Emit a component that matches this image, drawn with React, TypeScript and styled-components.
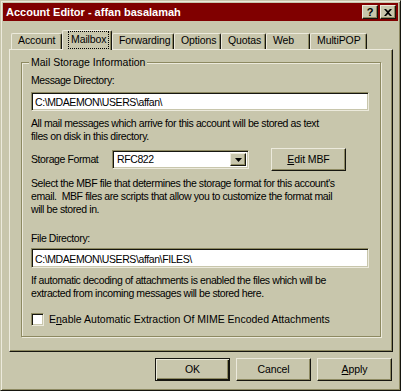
import React from 'react';
import styled, { createGlobalStyle, css } from 'styled-components';

// Brick-ish classic colour scheme
const FACE = '#c8c6ac';
const LIGHT = '#eceadc';
const SHADOW = '#8d8961';
const DARK = '#161610';
const CAPTION = '#800000';

const GlobalStyle = createGlobalStyle`
	html, body {
		margin: 0;
		padding: 0;
		background: ${FACE};
	}
	body {
		font-family: 'Liberation Sans', Arial, sans-serif;
		font-size: 10.5px;
		letter-spacing: -0.4px;
		line-height: 13px;
		color: #000;
	}
	* {
		box-sizing: border-box;
	}
`;

const raised = css`
	border: 1px solid;
	border-color: ${LIGHT} ${DARK} ${DARK} ${LIGHT};
	box-shadow: inset -1px -1px ${SHADOW};
`;

const sunken = css`
	border: 1px solid;
	border-color: ${SHADOW} ${LIGHT} ${LIGHT} ${SHADOW};
	box-shadow: inset 1px 1px ${DARK}, inset -1px -1px ${FACE};
`;

const Window = styled.div`
	width: 401px;
	height: 391px;
	display: flex;
	flex-direction: column;
	padding: 2px;
	border: 1px solid;
	border-color: ${FACE} ${DARK} ${DARK} ${FACE};
	box-shadow: inset 1px 1px ${LIGHT}, inset -1px -1px ${SHADOW};
	background: ${FACE};
`;

const TitleBar = styled.div`
	height: 18px;
	display: flex;
	align-items: center;
	padding: 0 2px 0 3px;
	background: ${CAPTION};
`;

const TitleText = styled.div`
	flex: 1;
	color: #fff;
	letter-spacing: 0;
	font-weight: bold;
	font-size: 11px;
`;

const CaptionButtons = styled.div`
	display: flex;
	gap: 2px;
`;

const CaptionButton = styled.div`
	${raised};
	width: 16px;
	height: 14px;
	display: flex;
	align-items: center;
	justify-content: center;
	background: ${FACE};
	letter-spacing: 0;
	font-weight: bold;
	font-size: 11px;
	line-height: 12px;
`;

const Body = styled.div`
	flex: 1;
	display: flex;
	flex-direction: column;
	padding: 9px 5px 0 6px;
`;

const TabStrip = styled.div`
	display: flex;
	align-items: flex-end;
	padding-left: 2px;
	position: relative;
	z-index: 1;
`;

const Tab = styled.div<{ $active?: boolean; $width: number }>`
	width: ${({ $width }) => $width}px;
	height: ${({ $active }) => ($active ? 20 : 16)}px;
	margin-bottom: ${({ $active }) => ($active ? -1 : 0)}px;
	padding-left: ${({ $active }) => ($active ? 5 : 6)}px;
	border-top: 1px solid ${LIGHT};
	border-left: 1px solid ${LIGHT};
	border-right: 1px solid ${DARK};
	border-radius: 2px 2px 0 0;
	box-shadow: inset -1px 0 ${SHADOW};
	background: ${FACE};
	letter-spacing: -0.1px;
	white-space: nowrap;
`;

const FocusRing = styled.span`
	display: inline-block;
	padding: 1px 2px 2px;
	border: 1px dotted #000;
	line-height: 13px;
`;

const TabPanel = styled.div`
	height: 303px;
	border: 1px solid;
	border-color: ${LIGHT} ${DARK} ${DARK} ${LIGHT};
	box-shadow: inset -1px -1px ${SHADOW};
	padding: 6px 11px 0 11px;
`;

const GroupBox = styled.fieldset`
	margin: 0;
	padding: 5px 11px 10px 9px;
	min-inline-size: 0;
	border: 1px solid ${SHADOW};
	box-shadow: inset 1px 1px ${LIGHT}, 1px 1px ${LIGHT};
	display: flex;
	flex-direction: column;
`;

const Legend = styled.legend`
	padding: 0 2px;
	margin-left: -2px;
	background: ${FACE};
	line-height: 13px;
	letter-spacing: 0;
`;

const FieldLabel = styled.div<{ $gap?: number }>`
	margin-top: ${({ $gap }) => $gap ?? 0}px;
`;

const TextBox = styled.div<{ $gap: number; $height: number }>`
	${sunken};
	margin-top: ${({ $gap }) => $gap}px;
	height: ${({ $height }) => $height}px;
	background: #fff;
	padding: 2px 3px 0;
	display: flex;
	align-items: center;
	white-space: nowrap;
`;

const HelpText = styled.p`
	margin: 6px 0 0;
	white-space: nowrap;
`;

const FormatRow = styled.div`
	margin-top: 5px;
	height: 23px;
	display: flex;
	align-items: center;
	white-space: nowrap;
`;

const RowLabel = styled.div`
	width: 81px;
`;

const Select = styled.div`
	${sunken};
	width: 137px;
	height: 19px;
	background: #fff;
	display: flex;
	align-items: stretch;
	padding: 2px;
`;

const SelectValue = styled.div`
	flex: 1;
	padding-left: 2px;
	display: flex;
	align-items: center;
`;

const SelectArrow = styled.div`
	${raised};
	width: 16px;
	background: ${FACE};
	display: flex;
	align-items: center;
	justify-content: center;
`;

const PushButton = styled.div<{ $default?: boolean }>`
	width: 75px;
	height: 23px;
	display: flex;
	align-items: center;
	justify-content: center;
	background: ${FACE};
	letter-spacing: -0.1px;
	border: 1px solid;
	border-color: ${({ $default }) =>
		$default ? DARK : `${LIGHT} ${DARK} ${DARK} ${LIGHT}`};
	box-shadow: ${({ $default }) =>
		$default
			? `inset 1px 1px ${LIGHT}, inset -1px -1px ${DARK}, inset -2px -2px ${SHADOW}`
			: `inset -1px -1px ${SHADOW}`};
`;

const EditButton = styled(PushButton)`
	margin-left: 22px;
`;

const CheckRow = styled.div`
	margin-top: 13px;
	display: flex;
	align-items: center;
	gap: 5px;
	white-space: nowrap;
`;

const CheckBox = styled.div`
	${sunken};
	width: 13px;
	height: 13px;
	background: #fff;
`;

const CheckLabel = styled.span`
	letter-spacing: 0;
`;

const ButtonBar = styled.div`
	margin-top: 6px;
	padding-right: 1px;
	display: flex;
	justify-content: flex-end;
	gap: 6px;
`;

const tabs = [
	{ label: 'Account', width: 51 },
	{ label: 'Mailbox', width: 50, active: true },
	{ label: 'Forwarding', width: 62 },
	{ label: 'Options', width: 47 },
	{ label: 'Quotas', width: 45 },
	{ label: 'Web', width: 44 },
	{ label: 'MultiPOP', width: 57 },
];

export default function App() {
	return (
		<>
			<GlobalStyle />
			<Window>
				<TitleBar>
					<TitleText>Account Editor - affan basalamah</TitleText>
					<CaptionButtons>
						<CaptionButton>?</CaptionButton>
						<CaptionButton>
							<svg width='8' height='7' viewBox='0 0 8 7'>
								<path
									d='M0 0h2l2 2 2-2h2L5 3.5 8 7H6L4 5 2 7H0l3-3.5z'
									fill='#000'
								/>
							</svg>
						</CaptionButton>
					</CaptionButtons>
				</TitleBar>

				<Body>
					<TabStrip>
						{tabs.map((t) => (
							<Tab key={t.label} $active={t.active} $width={t.width}>
								{t.active ? <FocusRing>{t.label}</FocusRing> : t.label}
							</Tab>
						))}
					</TabStrip>

					<TabPanel>
						<GroupBox>
							<Legend>Mail Storage Information</Legend>
							<FieldLabel>Message Directory:</FieldLabel>
							<TextBox $gap={5} $height={19}>C:\MDAEMON\USERS\affan\</TextBox>
							<HelpText>
								All mail messages which arrive for this account will be stored as text
								<br />
								files on disk in this directory.
							</HelpText>

							<FormatRow>
								<RowLabel>Storage Format</RowLabel>
								<Select>
									<SelectValue>RFC822</SelectValue>
									<SelectArrow>
										<svg width='7' height='4' viewBox='0 0 7 4'>
											<path d='M0 0h7L3.5 4z' fill='#000' />
										</svg>
									</SelectArrow>
								</Select>
								<EditButton>
									<span>
										<u>E</u>dit MBF
									</span>
								</EditButton>
							</FormatRow>

							<HelpText>
								Select the MBF file that determines the storage format for this account's
								<br />
								email.{'\u00a0'} MBF files are scripts that allow you to customize the format mail
								<br />
								will be stored in.
							</HelpText>

							<FieldLabel $gap={16}>File Directory:</FieldLabel>
							<TextBox $gap={3} $height={20}>C:\MDAEMON\USERS\affan\FILES\</TextBox>
							<HelpText>
								If automatic decoding of attachments is enabled the files which will be
								<br />
								extracted from incoming messages will be stored here.
							</HelpText>

							<CheckRow>
								<CheckBox />
								<CheckLabel>
									E<u>n</u>able Automatic Extraction Of MIME Encoded Attachments
								</CheckLabel>
							</CheckRow>
						</GroupBox>
					</TabPanel>

					<ButtonBar>
						<PushButton $default>OK</PushButton>
						<PushButton>Cancel</PushButton>
						<PushButton>
							<span>
								<u>A</u>pply
							</span>
						</PushButton>
					</ButtonBar>
				</Body>
			</Window>
		</>
	);
}
